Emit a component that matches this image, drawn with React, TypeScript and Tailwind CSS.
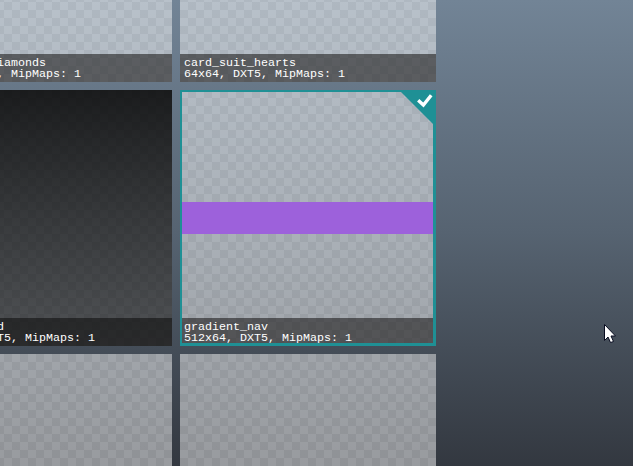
import React from "react";

const checker =
  "bg-[repeating-conic-gradient(#ebebeb80_0_25%,#fdfdfd80_0_50%)] bg-[length:16px_16px]";

function Caption({ title, info, tone = "bg-[#201e1e]/60" }: { title: string; info: string; tone?: string }) {
  return (
    <div
      className={`h-7 w-full ${tone} whitespace-pre pl-1 pt-1 font-['Liberation_Mono','DejaVu_Sans_Mono',monospace] text-[11.67px] leading-[11px] text-white`}
    >
      <div>{title}</div>
      <div>{info}</div>
    </div>
  );
}

function Card({ title, info, dark }: { title: string; info: string; dark?: boolean }) {
  return (
    <div className={`h-64 w-64 shrink-0 ${checker}`}>
      <div
        className={`flex h-full flex-col justify-end ${dark ? "bg-linear-to-b from-black/85 to-black/50" : ""}`}
      >
        <Caption title={title} info={info} tone={dark ? "bg-[#101010]/60" : undefined} />
      </div>
    </div>
  );
}

function SelectedCard() {
  return (
    <div className={`relative h-64 w-64 shrink-0 ${checker}`}>
      <div className="flex h-full flex-col justify-end">
        <div className="h-8 bg-[#9d61db]" />
        <div className="h-[84px]" />
        <Caption title="gradient_nav" info="512x64, DXT5, MipMaps: 1" />
      </div>
      <div className="absolute inset-0 border-[3px] border-l-2 border-t-2 border-[#1f9095]" />
      <svg className="absolute right-0 top-0" width="36" height="36" viewBox="0 0 36 36">
        <path d="M0 1H36V36L33 34Z" fill="#1f9095" />
        <path d="M18.2 10.3L23.4 15L31.2 5.3" fill="none" stroke="#fff" strokeWidth="3.4" />
      </svg>
    </div>
  );
}

export default function App() {
  return (
    <main className="relative h-[466px] w-[633px] overflow-hidden bg-linear-to-b from-[#728496] via-[#566371] to-[#333840]">
      <div className="-ml-[84px] -mt-[174px] grid w-max grid-cols-2 gap-2">
        <Card title="card_suit_diamonds" info="64x64, DXT5, MipMaps: 1" />
        <Card title="card_suit_hearts" info="64x64, DXT5, MipMaps: 1" />
        <Card title="gradient_end" info="512x512, DXT5, MipMaps: 1" dark />
        <SelectedCard />
        <Card title="" info="" />
        <Card title="" info="" />
      </div>
      <svg className="absolute left-[604px] top-[324px]" width="12" height="20" viewBox="0 0 12 20">
        <path
          d="M.5 .5V16.5L4 13L6.5 18.5L9.5 17.5L7 12H11.5Z"
          fill="#fff"
          stroke="#080c20"
          strokeWidth="1"
        />
      </svg>
    </main>
  );
}
